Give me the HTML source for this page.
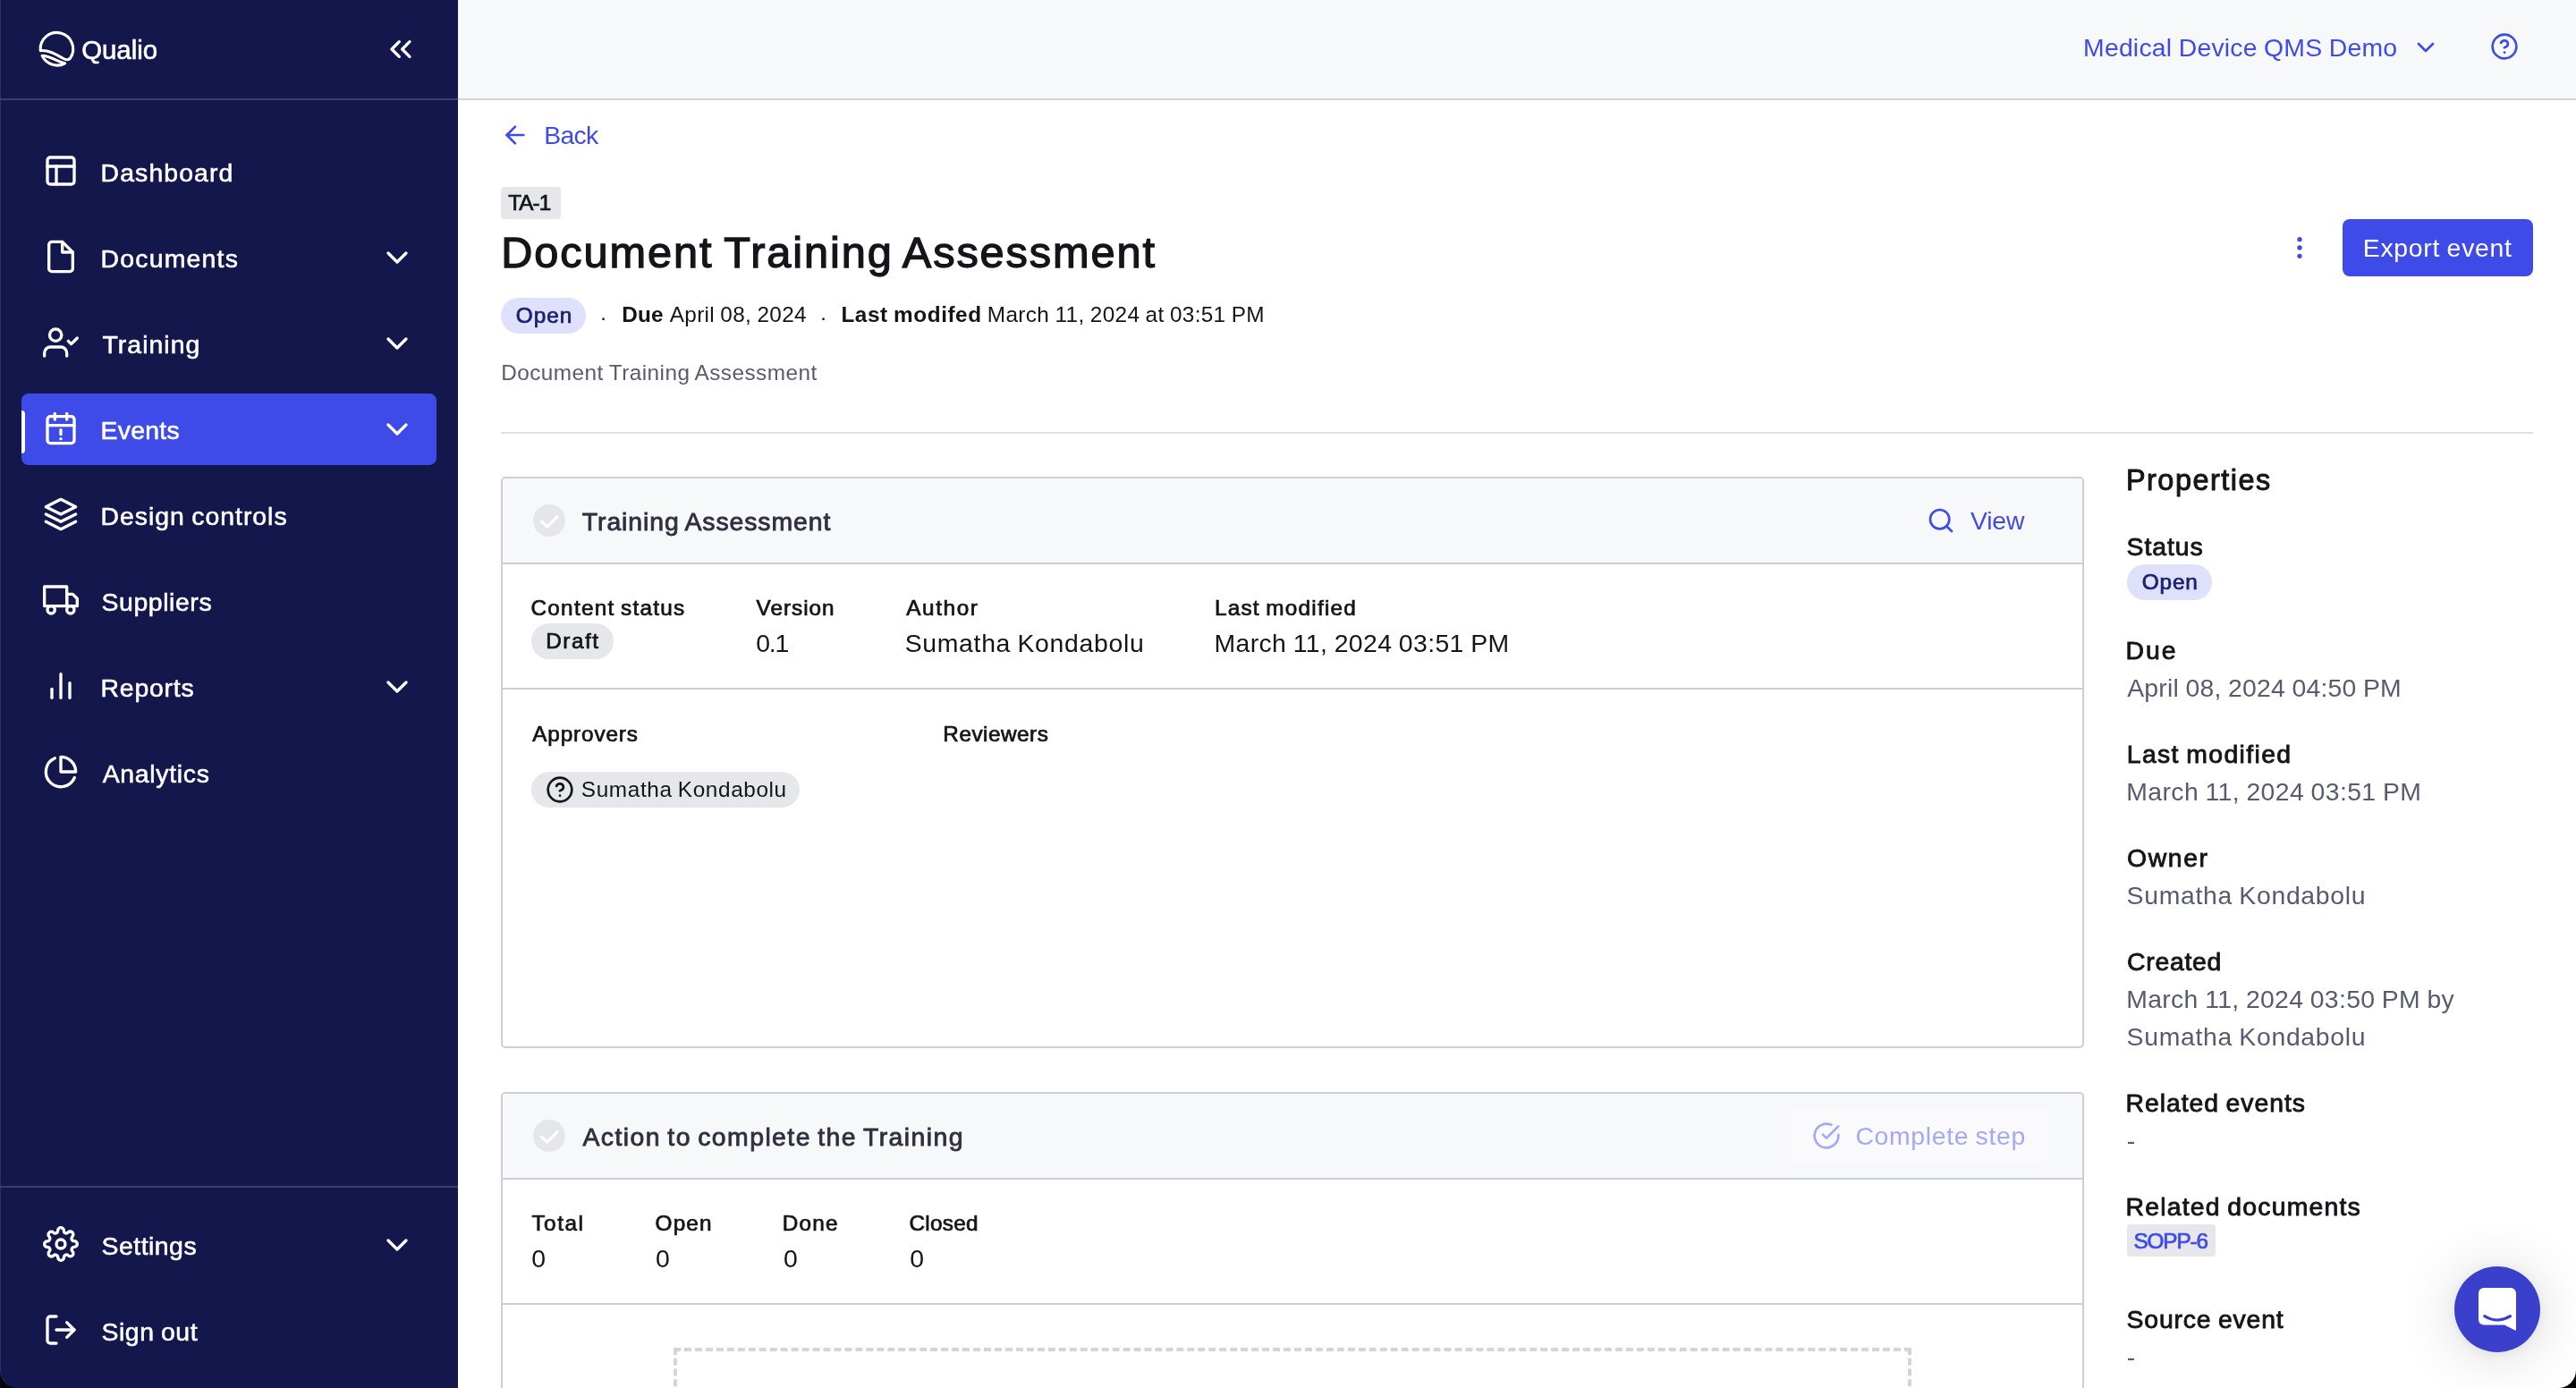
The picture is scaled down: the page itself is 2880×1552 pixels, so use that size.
<!DOCTYPE html>
<html lang="en"><head><meta charset="utf-8"><title>TA-1 Document Training Assessment - Qualio</title>
<style>
html,body{margin:0;padding:0}
html{background:#05070e;width:2880px;height:1552px;overflow:hidden}
body{width:2880px;height:1552px;position:relative;overflow:hidden;font-family:"Liberation Sans", sans-serif;background:#05070e}
.abs,.ic,.t{position:absolute}
.ic{display:block;overflow:visible}
.t{display:block;white-space:pre;line-height:1;margin:0;padding:0;font-weight:normal;text-decoration:none}
#tx{position:absolute;left:0;top:0;width:2880px;height:1552px;will-change:transform}
.s{-webkit-text-stroke:0.03em currentColor}
.w{-webkit-text-stroke:0.02em currentColor}
.S{-webkit-text-stroke:0.027em currentColor}
.b{font-weight:bold}
#side{left:0;top:0;width:512px;height:1552px;background:#14174b;border-bottom-left-radius:20px;box-sizing:border-box;border-left:1px solid #2c2f62}
#main{left:512px;top:0;width:2368px;height:1552px;background:#fff;border-bottom-right-radius:20px;overflow:hidden}
#topbar{left:512px;top:0;width:2368px;height:110px;background:#f7f8fa;border-bottom:2px solid #d2d4db}
.card{box-sizing:border-box;border:2px solid #cdced6;border-radius:5px;background:#fff;overflow:hidden}
.chead{left:0;top:0;right:0;height:94px;background:#f7f8fa;border-bottom:2px solid #cdced6}
.hl{height:2px;background:#cdced6}
.pill{border-radius:20px;height:40px}
.dot{width:36px;height:36px;border-radius:18px;background:#e5e6e9}

</style></head><body>
<main id="main" class="abs"></main>
<header id="topbar" class="abs"></header>
<nav id="side" class="abs"></nav>
<div class="abs" style="left:0;top:110px;width:512px;height:2px;background:#3b3d6a"></div>
<div class="abs" style="left:0;top:1326px;width:512px;height:2px;background:#3b3d6a"></div>
<div class="abs" style="left:24px;top:440px;width:464px;height:80px;border-radius:8px;background:#3f4be9"></div>
<div class="abs" style="left:24px;top:459px;width:4px;height:48px;border-radius:0 4px 4px 0;background:#fff"></div>
<svg class="ic" style="left:40px;top:30px" width="48" height="50" viewBox="40 30 48 50" fill="none" stroke="#fff" stroke-width="3.1" stroke-linecap="round" stroke-linejoin="round"><path d="M45.2 56.6A18.3 18.3 0 1 1 78.6 65C76.6 67.8 73.5 67 70 65C62 60.5 54.5 55.8 45.2 56.6z"/><path d="M47.1 62.2A18.3 18.3 0 0 0 72.6 70.8C64.5 69.5 57 62.5 47.1 62.2z"/></svg>
<svg class="ic" style="left:428px;top:35px" width="40" height="40" viewBox="0 0 24 24" fill="none" stroke="#fff" stroke-width="2" stroke-linecap="round" stroke-linejoin="round"><polyline points="11 17 6 12 11 7"/><polyline points="18 17 13 12 18 7"/></svg>
<svg class="ic" style="left:48px;top:171px" width="40" height="40" viewBox="0 0 24 24" fill="none" stroke="#fff" stroke-width="2" stroke-linecap="round" stroke-linejoin="round"><rect x="3" y="3" width="18" height="18" rx="2" ry="2"/><line x1="3" y1="9" x2="21" y2="9"/><line x1="9" y1="21" x2="9" y2="9"/></svg>
<svg class="ic" style="left:48px;top:267px" width="40" height="40" viewBox="0 0 24 24" fill="none" stroke="#fff" stroke-width="2" stroke-linecap="round" stroke-linejoin="round"><path d="M13 2H6a2 2 0 0 0-2 2v16a2 2 0 0 0 2 2h12a2 2 0 0 0 2-2V9z"/><polyline points="13 2 13 9 20 9"/></svg>
<svg class="ic" style="left:48px;top:363px" width="40" height="40" viewBox="0 0 24 24" fill="none" stroke="#fff" stroke-width="2" stroke-linecap="round" stroke-linejoin="round"><path d="M16 21v-2a4 4 0 0 0-4-4H5a4 4 0 0 0-4 4v2"/><circle cx="8.5" cy="7" r="4"/><polyline points="17 11 19 13 23 9"/></svg>
<svg class="ic" style="left:48px;top:459px" width="40" height="40" viewBox="0 0 24 24" fill="none" stroke="#fff" stroke-width="2" stroke-linecap="round" stroke-linejoin="round"><rect x="3" y="4" width="18" height="18" rx="2" ry="2"/><line x1="16" y1="2" x2="16" y2="6"/><line x1="8" y1="2" x2="8" y2="6"/><line x1="3" y1="10" x2="21" y2="10"/><line x1="12" y1="13" x2="12" y2="16"/><line x1="12" y1="19" x2="12.01" y2="19"/></svg>
<svg class="ic" style="left:48px;top:555px" width="40" height="40" viewBox="0 0 24 24" fill="none" stroke="#fff" stroke-width="2" stroke-linecap="round" stroke-linejoin="round"><polygon points="12 2 2 7 12 12 22 7 12 2"/><polyline points="2 17 12 22 22 17"/><polyline points="2 12 12 17 22 12"/></svg>
<svg class="ic" style="left:48px;top:651px" width="40" height="40" viewBox="0 0 24 24" fill="none" stroke="#fff" stroke-width="2" stroke-linecap="round" stroke-linejoin="round"><rect x="1" y="3" width="15" height="13"/><polygon points="16 8 20 8 23 11 23 16 16 16 16 8"/><circle cx="5.5" cy="18.5" r="2.5"/><circle cx="18.5" cy="18.5" r="2.5"/></svg>
<svg class="ic" style="left:48px;top:747px" width="40" height="40" viewBox="0 0 24 24" fill="none" stroke="#fff" stroke-width="2" stroke-linecap="round" stroke-linejoin="round"><line x1="18" y1="20" x2="18" y2="10"/><line x1="12" y1="20" x2="12" y2="4"/><line x1="6" y1="20" x2="6" y2="14"/></svg>
<svg class="ic" style="left:48px;top:843px" width="40" height="40" viewBox="0 0 24 24" fill="none" stroke="#fff" stroke-width="2" stroke-linecap="round" stroke-linejoin="round"><path d="M21.21 15.89A10 10 0 1 1 8 2.83"/><path d="M22 12A10 10 0 0 0 12 2v10z"/></svg>
<svg class="ic" style="left:48px;top:1371px" width="40" height="40" viewBox="0 0 24 24" fill="none" stroke="#fff" stroke-width="2" stroke-linecap="round" stroke-linejoin="round"><circle cx="12" cy="12" r="3"/><path d="M19.4 15a1.65 1.65 0 0 0 .33 1.82l.06.06a2 2 0 0 1 0 2.83 2 2 0 0 1-2.83 0l-.06-.06a1.65 1.65 0 0 0-1.82-.33 1.65 1.65 0 0 0-1 1.51V21a2 2 0 0 1-2 2 2 2 0 0 1-2-2v-.09A1.65 1.65 0 0 0 9 19.4a1.65 1.65 0 0 0-1.82.33l-.06.06a2 2 0 0 1-2.83 0 2 2 0 0 1 0-2.83l.06-.06a1.65 1.65 0 0 0 .33-1.82 1.65 1.65 0 0 0-1.51-1H3a2 2 0 0 1-2-2 2 2 0 0 1 2-2h.09A1.65 1.65 0 0 0 4.6 9a1.65 1.65 0 0 0-.33-1.82l-.06-.06a2 2 0 0 1 0-2.83 2 2 0 0 1 2.83 0l.06.06a1.65 1.65 0 0 0 1.82.33H9a1.65 1.65 0 0 0 1-1.51V3a2 2 0 0 1 2-2 2 2 0 0 1 2 2v.09a1.65 1.65 0 0 0 1 1.51 1.65 1.65 0 0 0 1.82-.33l.06-.06a2 2 0 0 1 2.83 0 2 2 0 0 1 0 2.83l-.06.06a1.65 1.65 0 0 0-.33 1.82V9a1.65 1.65 0 0 0 1.51 1H21a2 2 0 0 1 2 2 2 2 0 0 1-2 2h-.09a1.65 1.65 0 0 0-1.51 1z"/></svg>
<svg class="ic" style="left:48px;top:1467px" width="40" height="40" viewBox="0 0 24 24" fill="none" stroke="#fff" stroke-width="2" stroke-linecap="round" stroke-linejoin="round"><path d="M9 21H5a2 2 0 0 1-2-2V5a2 2 0 0 1 2-2h4"/><polyline points="16 17 21 12 16 7"/><line x1="21" y1="12" x2="9" y2="12"/></svg>
<svg class="ic" style="left:424px;top:268px" width="40" height="40" viewBox="0 0 24 24" fill="none" stroke="#fff" stroke-width="2" stroke-linecap="round" stroke-linejoin="round"><polyline points="6 9 12 15 18 9"/></svg>
<svg class="ic" style="left:424px;top:364px" width="40" height="40" viewBox="0 0 24 24" fill="none" stroke="#fff" stroke-width="2" stroke-linecap="round" stroke-linejoin="round"><polyline points="6 9 12 15 18 9"/></svg>
<svg class="ic" style="left:424px;top:460px" width="40" height="40" viewBox="0 0 24 24" fill="none" stroke="#fff" stroke-width="2" stroke-linecap="round" stroke-linejoin="round"><polyline points="6 9 12 15 18 9"/></svg>
<svg class="ic" style="left:424px;top:748px" width="40" height="40" viewBox="0 0 24 24" fill="none" stroke="#fff" stroke-width="2" stroke-linecap="round" stroke-linejoin="round"><polyline points="6 9 12 15 18 9"/></svg>
<svg class="ic" style="left:424px;top:1372px" width="40" height="40" viewBox="0 0 24 24" fill="none" stroke="#fff" stroke-width="2" stroke-linecap="round" stroke-linejoin="round"><polyline points="6 9 12 15 18 9"/></svg>
<svg class="ic" style="left:2696px;top:37px" width="32" height="32" viewBox="0 0 24 24" fill="none" stroke="#3f4be9" stroke-width="2" stroke-linecap="round" stroke-linejoin="round"><polyline points="6 9 12 15 18 9"/></svg>
<svg class="ic" style="left:2784px;top:36px" width="32" height="32" viewBox="0 0 24 24" fill="none" stroke="#3f4be9" stroke-width="2" stroke-linecap="round" stroke-linejoin="round"><circle cx="12" cy="12" r="10"/><path d="M9.09 9a3 3 0 0 1 5.83 1c0 2-3 3-3 3"/><line x1="12" y1="17" x2="12.01" y2="17"/></svg>
<svg class="ic" style="left:560px;top:135px" width="32" height="32" viewBox="0 0 24 24" fill="none" stroke="#3f4be9" stroke-width="2" stroke-linecap="round" stroke-linejoin="round"><line x1="19" y1="12" x2="5" y2="12"/><polyline points="12 19 5 12 12 5"/></svg>
<div class="abs" style="left:560px;top:209px;width:67px;height:36px;border-radius:4px;background:#e6e7eb"></div>
<div class="abs pill" style="left:560px;top:333px;width:95px;background:#dfe0fb"></div>
<svg class="ic" style="left:2555px;top:261px" width="32" height="32" viewBox="0 0 24 24" fill="none" stroke="#3f4be9" stroke-width="2" stroke-linecap="round" stroke-linejoin="round"><circle cx="12" cy="12" r="1"/><circle cx="12" cy="5" r="1"/><circle cx="12" cy="19" r="1"/></svg>
<div class="abs" style="left:2619px;top:245px;width:213px;height:64px;border-radius:8px;background:#3f4be9"></div>
<div class="abs" style="left:560px;top:483px;width:2272px;height:2px;background:#e0e1e6"></div>
<div class="abs card" style="left:560px;top:533px;width:1770px;height:639px"><div class="abs chead"></div><div class="abs hl" style="left:0;right:0;top:234px"></div></div>
<div class="abs dot" style="left:596px;top:564px"></div>
<svg class="ic" style="left:596px;top:564px" width="36" height="36" viewBox="0 0 36 36" fill="none" stroke="#fff" stroke-width="3.2" stroke-linecap="round" stroke-linejoin="round"><polyline points="9.7 19.3 16 25 27 13.6"/></svg>
<svg class="ic" style="left:2154px;top:566px" width="32" height="32" viewBox="0 0 24 24" fill="none" stroke="#3f4be9" stroke-width="2" stroke-linecap="round" stroke-linejoin="round"><circle cx="11" cy="11" r="8"/><line x1="21" y1="21" x2="16.65" y2="16.65"/></svg>
<div class="abs pill" style="left:594px;top:697px;width:92px;background:#e6e7eb"></div>
<div class="abs pill" style="left:594px;top:863px;width:300px;background:#e6e7eb"></div>
<svg class="ic" style="left:610px;top:867px" width="32" height="32" viewBox="0 0 24 24" fill="none" stroke="#14151a" stroke-width="2" stroke-linecap="round" stroke-linejoin="round"><circle cx="12" cy="12" r="10"/><path d="M9.09 9a3 3 0 0 1 5.83 1c0 2-3 3-3 3"/><line x1="12" y1="17" x2="12.01" y2="17"/></svg>
<div class="abs card" style="left:560px;top:1221px;width:1770px;height:331px;border-bottom:0;border-bottom-left-radius:0;border-bottom-right-radius:0"><div class="abs chead"></div><div class="abs hl" style="left:0;right:0;top:234px"></div><div class="abs" style="left:191px;top:284px;width:1376px;height:200px;border:4px dashed #d3d5dc"></div></div>
<div class="abs dot" style="left:596px;top:1252px"></div>
<svg class="ic" style="left:596px;top:1252px" width="36" height="36" viewBox="0 0 36 36" fill="none" stroke="#fff" stroke-width="3.2" stroke-linecap="round" stroke-linejoin="round"><polyline points="9.7 19.3 16 25 27 13.6"/></svg>
<div class="abs" style="left:2002px;top:1238px;width:286px;height:64px;border-radius:8px;background:#fafafc"></div>
<svg class="ic" style="left:2026px;top:1254px" width="32" height="32" viewBox="0 0 24 24" fill="none" stroke="#a3a9f4" stroke-width="2" stroke-linecap="round" stroke-linejoin="round"><path d="M22 11.08V12a10 10 0 1 1-5.93-9.14"/><polyline points="22 4 12 14.01 9 11.01"/></svg>
<div class="abs pill" style="left:2378px;top:631px;width:95px;background:#dfe0fb"></div>
<div class="abs" style="left:2378px;top:1369px;width:99px;height:36px;border-radius:4px;background:#e6e7eb"></div>
<div class="abs" style="left:2744px;top:1416px;width:96px;height:96px;border-radius:48px;background:#3a40cc;box-shadow:0 2px 12px rgba(0,0,0,.06),0 4px 64px rgba(0,0,0,.16)"></div>
<svg class="ic" style="left:2768px;top:1438px" width="48" height="52" viewBox="0 0 48 52"><path d="M9 2h30a6 6 0 0 1 6 6v42l-13-6.5H9a6 6 0 0 1-6-6V8a6 6 0 0 1 6-6z" fill="#fff"/><path d="M9.8 33.6c9 5.6 19.6 5.6 28.6 0" fill="none" stroke="#3a40cc" stroke-width="3.2" stroke-linecap="round"/></svg>
<div id="tx">
<a href="#" class="t w" style="left:91.18px;top:40.59px;font-size:29.43px;color:#fff;letter-spacing:-0.031px">Qualio</a>
<a href="#" class="t w" style="left:112.60px;top:178.94px;font-size:28.42px;color:#fff;letter-spacing:1.101px">Dashboard</a>
<a href="#" class="t w" style="left:112.60px;top:274.94px;font-size:28.42px;color:#fff;letter-spacing:1.206px">Documents</a>
<a href="#" class="t w" style="left:114.51px;top:370.94px;font-size:28.42px;color:#fff;letter-spacing:1.042px">Training</a>
<a href="#" class="t w" style="left:112.60px;top:466.94px;font-size:28.42px;color:#fff;letter-spacing:0.234px">Events</a>
<a href="#" class="t w" style="left:112.60px;top:562.94px;font-size:28.42px;color:#fff;letter-spacing:0.976px;word-spacing:-1.424px">Design controls</a>
<a href="#" class="t w" style="left:113.53px;top:658.94px;font-size:28.42px;color:#fff;letter-spacing:0.582px">Suppliers</a>
<a href="#" class="t w" style="left:112.60px;top:754.94px;font-size:28.42px;color:#fff;letter-spacing:0.759px">Reports</a>
<a href="#" class="t w" style="left:114.67px;top:850.94px;font-size:28.42px;color:#fff;letter-spacing:0.697px">Analytics</a>
<a href="#" class="t w" style="left:113.53px;top:1378.94px;font-size:28.42px;color:#fff;letter-spacing:0.492px">Settings</a>
<a href="#" class="t w" style="left:113.53px;top:1474.94px;font-size:28.42px;color:#fff;letter-spacing:0.545px;word-spacing:-1.028px">Sign out</a>
<a href="#" class="t" style="left:2329.04px;top:38.94px;font-size:28.42px;color:#3f4be9;letter-spacing:0.194px;word-spacing:-0.678px">Medical Device QMS Demo</a>
<a href="#" class="t" style="left:608.23px;top:137.44px;font-size:28.42px;color:#3f4be9;letter-spacing:-0.690px">Back</a>
<div class="t s" style="left:568.30px;top:215.38px;font-size:24.36px;color:#14151a;letter-spacing:-1.022px">TA-1</div>
<h1 class="t S" style="left:560.28px;top:257.66px;font-size:48.72px;color:#14151a;letter-spacing:1.885px;word-spacing:-2.594px">Document Training Assessment</h1>
<div class="t s" style="left:576.87px;top:341.08px;font-size:24.36px;color:#1b2070;letter-spacing:0.943px">Open</div>
<div class="t" style="left:670.60px;top:342.68px;font-size:24.36px;color:#14151a">·</div>
<label class="t b" style="left:695.18px;top:340.18px;font-size:24.36px;color:#14151a;letter-spacing:0.173px">Due</label>
<div class="t" style="left:748.75px;top:340.18px;font-size:24.36px;color:#14151a;letter-spacing:0.293px;word-spacing:-0.648px">April 08, 2024</div>
<div class="t" style="left:916.60px;top:342.68px;font-size:24.36px;color:#14151a">·</div>
<div class="t b" style="left:940.41px;top:340.18px;font-size:24.36px;color:#14151a;letter-spacing:0.540px;word-spacing:-0.852px">Last modifed</div>
<div class="t" style="left:1103.86px;top:340.18px;font-size:24.36px;color:#14151a;letter-spacing:0.317px;word-spacing:-0.744px">March 11, 2024 at 03:51 PM</div>
<p class="t" style="left:560.16px;top:405.38px;font-size:24.36px;color:#575b6f;letter-spacing:0.447px;word-spacing:-0.807px">Document Training Assessment</p>
<span class="t" style="left:2641.75px;top:263.44px;font-size:28.42px;color:#fff;letter-spacing:0.715px;word-spacing:-1.124px">Export event</span>
<h3 class="t s" style="left:650.85px;top:569.44px;font-size:28.42px;color:#2e3040;letter-spacing:0.895px;word-spacing:-1.281px">Training Assessment</h3>
<a href="#" class="t" style="left:2203.02px;top:567.94px;font-size:28.42px;color:#3f4be9;letter-spacing:-0.222px">View</a>
<label class="t s" style="left:593.51px;top:667.98px;font-size:24.36px;color:#14151a;letter-spacing:1.240px;word-spacing:-1.548px">Content status</label>
<div class="t s" style="left:610.26px;top:705.08px;font-size:24.36px;color:#14151a;letter-spacing:1.474px">Draft</div>
<label class="t s" style="left:845.54px;top:667.98px;font-size:24.36px;color:#14151a;letter-spacing:0.966px">Version</label>
<div class="t" style="left:845.24px;top:704.64px;font-size:28.42px;color:#14151a;letter-spacing:-1.201px">0.1</div>
<label class="t s" style="left:1013.22px;top:667.98px;font-size:24.36px;color:#14151a;letter-spacing:1.581px">Author</label>
<div class="t" style="left:1011.68px;top:704.64px;font-size:28.42px;color:#14151a;letter-spacing:0.674px;word-spacing:-1.150px">Sumatha Kondabolu</div>
<label class="t s" style="left:1357.92px;top:667.98px;font-size:24.36px;color:#14151a;letter-spacing:1.222px;word-spacing:-1.609px">Last modified</label>
<div class="t" style="left:1357.43px;top:704.64px;font-size:28.42px;color:#14151a;letter-spacing:0.384px;word-spacing:-0.853px">March 11, 2024 03:51 PM</div>
<label class="t s" style="left:595.22px;top:809.48px;font-size:24.36px;color:#14151a;letter-spacing:0.844px">Approvers</label>
<label class="t s" style="left:1054.36px;top:809.48px;font-size:24.36px;color:#14151a;letter-spacing:0.469px">Reviewers</label>
<div class="t" style="left:649.86px;top:871.38px;font-size:24.36px;color:#14151a;letter-spacing:0.596px;word-spacing:-1.020px">Sumatha Kondabolu</div>
<h3 class="t s" style="left:651.44px;top:1257.14px;font-size:28.42px;color:#2e3040;letter-spacing:1.421px;word-spacing:-1.914px">Action to complete the Training</h3>
<span class="t" style="left:2074.43px;top:1255.94px;font-size:28.42px;color:#a3a9f4;letter-spacing:0.637px;word-spacing:-1.044px">Complete step</span>
<label class="t s" style="left:594.42px;top:1356.28px;font-size:24.36px;color:#14151a;letter-spacing:1.513px">Total</label>
<div class="t s" style="left:732.60px;top:1356.28px;font-size:24.36px;color:#14151a;letter-spacing:1.134px">Open</div>
<label class="t s" style="left:874.72px;top:1356.28px;font-size:24.36px;color:#14151a;letter-spacing:1.168px">Done</label>
<label class="t s" style="left:1016.51px;top:1356.28px;font-size:24.36px;color:#14151a;letter-spacing:0.229px">Closed</label>
<div class="t" style="left:594.30px;top:1392.94px;font-size:28.42px;color:#14151a">0</div>
<div class="t" style="left:733.10px;top:1392.94px;font-size:28.42px;color:#14151a">0</div>
<div class="t" style="left:876.10px;top:1392.94px;font-size:28.42px;color:#14151a">0</div>
<div class="t" style="left:1017.30px;top:1392.94px;font-size:28.42px;color:#14151a">0</div>
<h2 class="t s" style="left:2376.92px;top:521.31px;font-size:32.48px;color:#14151a;letter-spacing:1.492px">Properties</h2>
<label class="t s" style="left:2377.54px;top:596.74px;font-size:28.42px;color:#14151a;letter-spacing:0.929px">Status</label>
<div class="t s" style="left:2394.83px;top:639.08px;font-size:24.36px;color:#1b2070;letter-spacing:0.790px">Open</div>
<label class="t s" style="left:2376.61px;top:712.74px;font-size:28.42px;color:#14151a;letter-spacing:1.948px">Due</label>
<div class="t" style="left:2378.19px;top:754.74px;font-size:28.42px;color:#575b6f;letter-spacing:0.203px;word-spacing:-0.669px">April 08, 2024 04:50 PM</div>
<label class="t s" style="left:2377.77px;top:828.84px;font-size:28.42px;color:#14151a;letter-spacing:1.351px;word-spacing:-1.848px">Last modified</label>
<div class="t" style="left:2377.28px;top:870.94px;font-size:28.42px;color:#575b6f;letter-spacing:0.374px;word-spacing:-0.826px">March 11, 2024 03:51 PM</div>
<label class="t s" style="left:2378.12px;top:944.94px;font-size:28.42px;color:#14151a;letter-spacing:1.560px">Owner</label>
<div class="t" style="left:2377.56px;top:986.94px;font-size:28.42px;color:#575b6f;letter-spacing:0.667px;word-spacing:-1.117px">Sumatha Kondabolu</div>
<label class="t s" style="left:2378.04px;top:1060.74px;font-size:28.42px;color:#14151a;letter-spacing:0.715px">Created</label>
<div class="t" style="left:2377.28px;top:1102.74px;font-size:28.42px;color:#575b6f;letter-spacing:0.308px;word-spacing:-0.767px">March 11, 2024 03:50 PM by</div>
<div class="t" style="left:2377.56px;top:1144.74px;font-size:28.42px;color:#575b6f;letter-spacing:0.667px;word-spacing:-1.117px">Sumatha Kondabolu</div>
<label class="t s" style="left:2376.61px;top:1218.94px;font-size:28.42px;color:#14151a;letter-spacing:0.940px;word-spacing:-1.350px">Related events</label>
<div class="t" style="left:2377.80px;top:1260.94px;font-size:28.42px;color:#575b6f">-</div>
<label class="t s" style="left:2376.61px;top:1334.94px;font-size:28.42px;color:#14151a;letter-spacing:1.189px;word-spacing:-1.599px">Related documents</label>
<a href="#" class="t s" style="left:2385.42px;top:1375.68px;font-size:24.36px;color:#3f4be9;letter-spacing:-1.125px">SOPP-6</a>
<label class="t s" style="left:2377.54px;top:1461.44px;font-size:28.42px;color:#14151a;letter-spacing:0.820px;word-spacing:-1.248px">Source event</label>
<div class="t" style="left:2377.80px;top:1503.44px;font-size:28.42px;color:#575b6f">-</div>
</div>
</body></html>
